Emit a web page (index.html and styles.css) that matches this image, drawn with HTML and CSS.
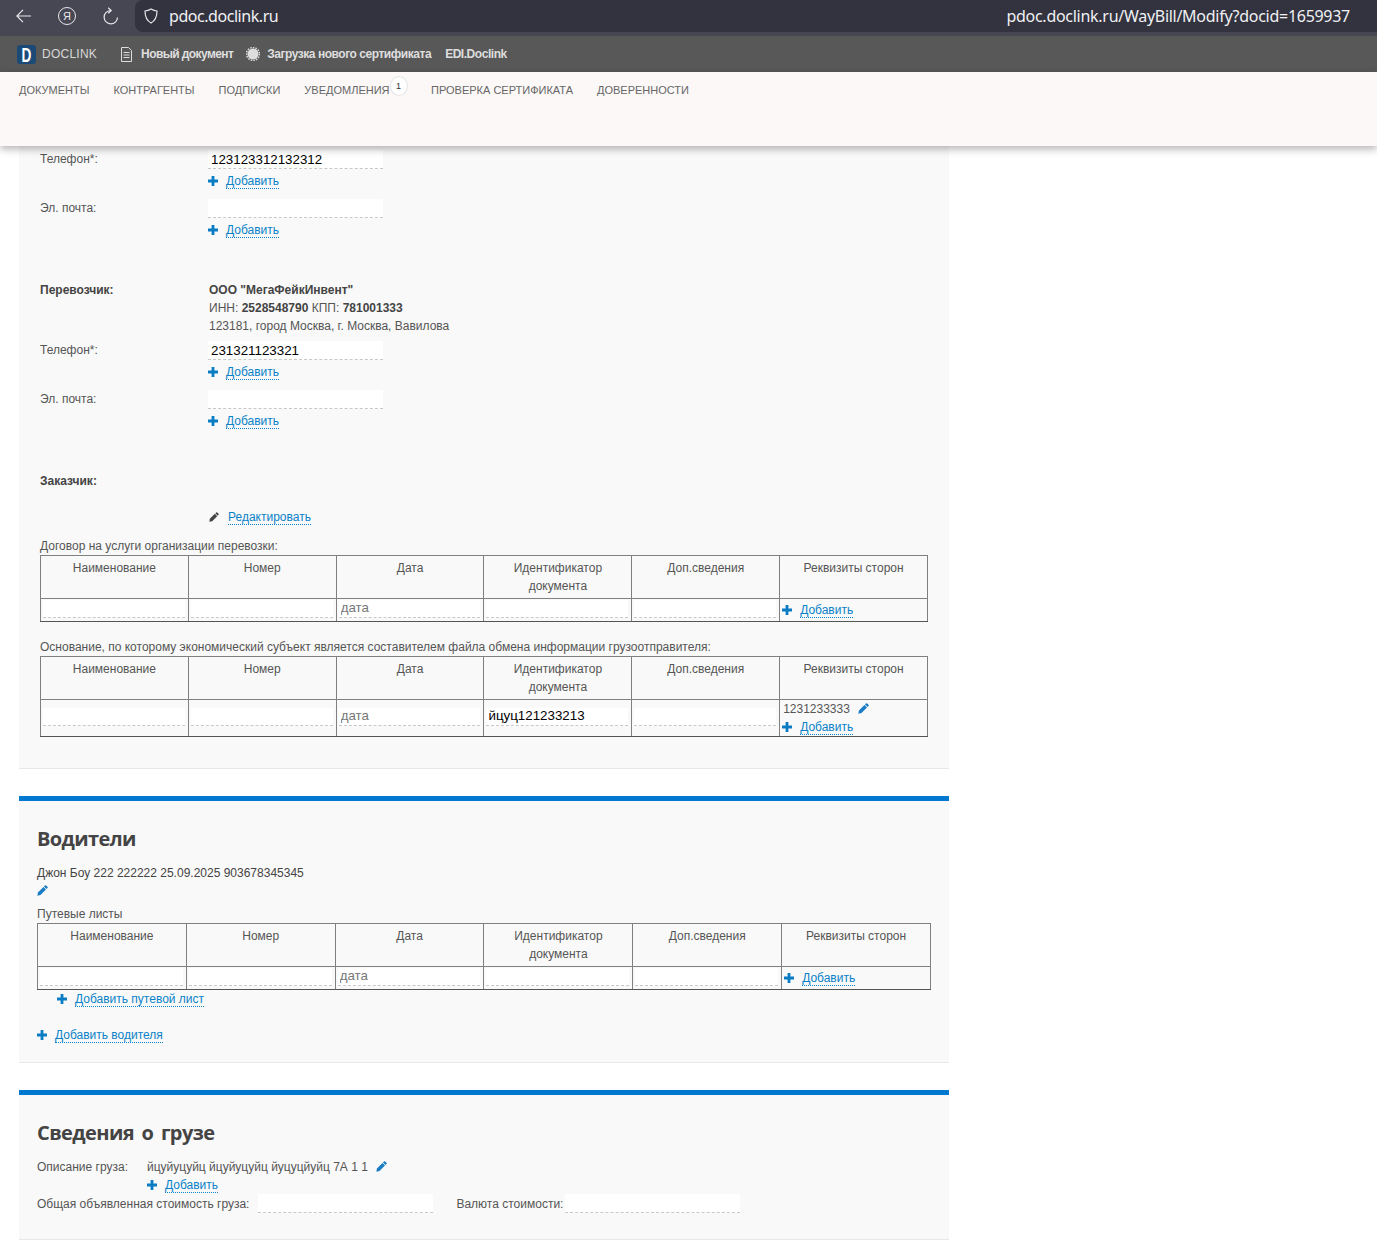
FILE: index.html
```html
<!DOCTYPE html>
<html lang="ru">
<head>
<meta charset="utf-8">
<title>DocLink</title>
<link rel="stylesheet" href="styles.css">
</head>
<body>
<svg class="defs" width="0" height="0" aria-hidden="true">
  <symbol id="plus" viewBox="0 0 10 10"><path d="M3.6 0h2.8v3.6H10v2.8H6.4V10H3.6V6.4H0V3.6h3.6z"/></symbol>
  <symbol id="pencil" viewBox="0 0 12 12"><path d="M8.6.6a1 1 0 0 1 1.4 0l1.4 1.4a1 1 0 0 1 0 1.4l-1 1L7.6 1.6zM7 2.2 9.8 5l-6 6L.4 11.8 1 8.200z"/></symbol>
</svg>

<div class="browser">
  <svg class="b-icon b-back" width="15" height="14" viewBox="0 0 15 14"><path d="M7 .8.9 7 7 13.200M.9 7H15" fill="none" stroke="#e8e8ec" stroke-width="1.200"/></svg>
  <span class="b-ya">Я</span>
  <svg class="b-icon b-reload" width="16" height="18" viewBox="0 0 16 18"><path d="M7.500 3.500A6.700 6.700 0 1 0 14.500 10.500M5.200.8 8.200 3.500 5.200 6.300" fill="none" stroke="#e8e8ec" stroke-width="1.200"/></svg>
  <div class="b-address">
    <svg class="b-shield" width="14" height="16" viewBox="0 0 14 16"><path d="M7 1c2 1.200 3.800 1.800 6 2 0 5-1.500 9.500-6 12C2.500 12.500 1 8 1 3c2.200-.2 4-.8 6-2z" fill="none" stroke="#e8e8ec" stroke-width="1.200"/></svg>
    <span class="b-host">pdoc.doclink.ru</span>
    <span class="b-url">pdoc.doclink.ru/WayBill/Modify?docid=1659937</span>
  </div>
</div>

<div class="toolbar">
  <span class="logo"><span class="logo-d">D</span></span>
  <span class="brand">DOCLINK</span>
  <svg class="tool-icon doc-icon" width="13" height="15" viewBox="0 0 13 15"><path d="M1.500.5h7l3 3v11h-10zM3.500 5.500h6M3.500 8h6M3.500 10.500h6" fill="none" stroke="#ddd"/></svg>
  <span class="tool-link tight">Новый документ</span>
  <svg class="tool-icon gear-icon" width="14" height="14" viewBox="0 0 14 14"><circle cx="7" cy="7" r="5.500" fill="#ddd"/><circle cx="7" cy="7" r="6.500" fill="none" stroke="#ddd" stroke-width="1.500" stroke-dasharray="1.500 1.200"/></svg>
  <span class="tool-link gear-text">Загрузка нового сертификата</span>
  <span class="tool-link edi">EDI.Doclink</span>
</div>

<header class="nav">
  <a class="nav-item">ДОКУМЕНТЫ</a>
  <a class="nav-item">КОНТРАГЕНТЫ</a>
  <a class="nav-item">ПОДПИСКИ</a>
  <a class="nav-item nav-badged">УВЕДОМЛЕНИЯ<span class="badge">1</span></a>
  <a class="nav-item">ПРОВЕРКА СЕРТИФИКАТА</a>
  <a class="nav-item">ДОВЕРЕННОСТИ</a>
</header>

<main class="page">
  <section class="panel panel-parties">
    <div class="field">
      <div class="label">Телефон*:</div>
      <div class="value">
        <input class="inp" value="123123312132312">
        <a class="add"><svg class="ico"><use href="#plus"/></svg><span class="lnk">Добавить</span></a>
      </div>
    </div>
    <div class="field">
      <div class="label">Эл. почта:</div>
      <div class="value">
        <input class="inp">
        <a class="add"><svg class="ico"><use href="#plus"/></svg><span class="lnk">Добавить</span></a>
      </div>
    </div>

    <div class="party">
      <div class="label"><b>Перевозчик:</b></div>
      <div class="party-text">
        <b>ООО "МегаФейкИнвент"</b><br>
        ИНН: <b>2528548790</b> КПП: <b>781001333</b><br>
        123181, город Москва, г. Москва, Вавилова
      </div>
    </div>
    <div class="field">
      <div class="label">Телефон*:</div>
      <div class="value">
        <input class="inp" value="231321123321">
        <a class="add"><svg class="ico"><use href="#plus"/></svg><span class="lnk">Добавить</span></a>
      </div>
    </div>
    <div class="field">
      <div class="label">Эл. почта:</div>
      <div class="value">
        <input class="inp">
        <a class="add"><svg class="ico"><use href="#plus"/></svg><span class="lnk">Добавить</span></a>
      </div>
    </div>

    <div class="party party-customer">
      <div class="label"><b>Заказчик:</b></div>
    </div>
    <a class="add edit"><svg class="ico ico-dark"><use href="#pencil"/></svg><span class="lnk">Редактировать</span></a>

    <div class="caption">Договор на услуги организации перевозки:</div>
    <table class="grid">
      <tr>
        <th>Наименование</th><th>Номер</th><th>Дата</th><th>Идентификатор документа</th><th>Доп.сведения</th><th>Реквизиты сторон</th>
      </tr>
      <tr>
        <td><input class="inp cell-inp"></td>
        <td><input class="inp cell-inp"></td>
        <td><input class="inp cell-inp" placeholder="дата"></td>
        <td><input class="inp cell-inp"></td>
        <td><input class="inp cell-inp"></td>
        <td class="req"><a class="add"><svg class="ico"><use href="#plus"/></svg><span class="lnk">Добавить</span></a></td>
      </tr>
    </table>

    <div class="caption caption-second">Основание, по которому экономический субъект является составителем файла обмена информации грузоотправителя:</div>
    <table class="grid">
      <tr>
        <th>Наименование</th><th>Номер</th><th>Дата</th><th>Идентификатор документа</th><th>Доп.сведения</th><th>Реквизиты сторон</th>
      </tr>
      <tr>
        <td><input class="inp cell-inp"></td>
        <td><input class="inp cell-inp"></td>
        <td><input class="inp cell-inp" placeholder="дата"></td>
        <td><input class="inp cell-inp" value="йцуц121233213"></td>
        <td><input class="inp cell-inp"></td>
        <td class="req">
          <div class="req-line">1231233333<svg class="ico ico-pen"><use href="#pencil"/></svg></div>
          <a class="add"><svg class="ico"><use href="#plus"/></svg><span class="lnk">Добавить</span></a>
        </td>
      </tr>
    </table>
  </section>

  <section class="panel panel-blue panel-drivers">
    <h2 class="title">Водители</h2>
    <div class="line driver">Джон Боу 222 222222 25.09.2025 903678345345</div>
    <div class="line"><svg class="ico ico-pen ico-solo"><use href="#pencil"/></svg></div>
    <div class="line waybills">Путевые листы</div>
    <table class="grid grid-wide">
      <tr>
        <th>Наименование</th><th>Номер</th><th>Дата</th><th>Идентификатор документа</th><th>Доп.сведения</th><th>Реквизиты сторон</th>
      </tr>
      <tr>
        <td><input class="inp cell-inp"></td>
        <td><input class="inp cell-inp"></td>
        <td><input class="inp cell-inp" placeholder="дата"></td>
        <td><input class="inp cell-inp"></td>
        <td><input class="inp cell-inp"></td>
        <td class="req"><a class="add"><svg class="ico"><use href="#plus"/></svg><span class="lnk">Добавить</span></a></td>
      </tr>
    </table>
    <a class="add add-waybill"><svg class="ico"><use href="#plus"/></svg><span class="lnk">Добавить путевой лист</span></a>
    <a class="add add-driver"><svg class="ico"><use href="#plus"/></svg><span class="lnk">Добавить водителя</span></a>
  </section>

  <section class="panel panel-blue panel-cargo">
    <h2 class="title">Сведения о грузе</h2>
    <div class="cargo-row">
      <div class="cargo-label">Описание груза:</div>
      <div>йцуйуцуйц йцуйуцуйц йуцуцйуйц 7А 1 1<svg class="ico ico-pen"><use href="#pencil"/></svg></div>
    </div>
    <a class="add add-cargo"><svg class="ico"><use href="#plus"/></svg><span class="lnk">Добавить</span></a>
    <div class="cost-row">
      <span>Общая объявленная стоимость груза:</span>
      <input class="inp">
      <span class="currency">Валюта стоимости:</span>
      <input class="inp">
    </div>
  </section>
</main>
</body>
</html>
```
FILE: styles.css
```css
* { box-sizing: border-box; }
html, body { margin: 0; padding: 0; background: #fff; }
body {
  width: 1377px;
  height: 1242px;
  overflow: hidden;
  font: 12px/18px "Liberation Sans", Arial, sans-serif;
  color: #555;
}
.defs { display: block; height: 0; }

/* browser chrome */
.browser {
  display: flex;
  align-items: center;
  height: 36px;
  background: #464753;
  padding-bottom: 4px;
}
.b-icon { flex: none; }
.b-back { margin-left: 16px; }
.b-ya {
  flex: none;
  width: 18px;
  height: 18px;
  margin-left: 27px;
  border: 1.200px solid #e8e8ec;
  border-radius: 50%;
  color: #e8e8ec;
  font: 11px/16px "Liberation Sans", sans-serif;
  text-align: center;
}
.b-reload { margin-left: 27px; }
.b-address {
  display: flex;
  align-items: center;
  flex: 1;
  height: 32px;
  margin-left: 16px;
  padding-left: 9px;
  background: #32333e;
  border-radius: 8px 0 0 8px;
  font: 16px/32px "Noto Sans", sans-serif;
  color: #f0f0f3;
}
.b-host { margin-left: 11px; letter-spacing: -0.45px; }
.b-url { margin-left: auto; margin-right: 27px; letter-spacing: -0.28px; }

/* dark toolbar */
.toolbar {
  display: flex;
  align-items: center;
  height: 36px;
  background: #585858;
  padding-left: 17px;
  color: #dedede;
}
.logo {
  width: 19px;
  height: 19px;
  border-radius: 3px;
  background: #1b4a76;
  color: #fff;
  font: bold 21px/19px "Liberation Sans", sans-serif;
  text-align: center;
}
.logo-d { display: block; transform: scaleX(.65); }
.brand { margin-left: 6px; color: #d8d8d8; letter-spacing: 0.25px; }
.doc-icon { margin-left: 23px; }
.gear-icon { margin-left: 13px; }
.tool-link { margin-left: 8px; font-weight: bold; letter-spacing: -0.46px; }
.tight { letter-spacing: -0.6px; }
.gear-text { margin-left: 7px; }
.edi { margin-left: 14px; }

/* site nav */
.nav {
  position: relative;
  z-index: 2;
  display: flex;
  align-items: flex-start;
  gap: 24px;
  height: 74px;
  padding: 9px 0 0 19px;
  background: #fbf8f7;
  box-shadow: 0 3px 8px rgba(0, 0, 0, .3);
  font-size: 11px;
  color: #666;
}
.nav-item { white-space: nowrap; }
.nav-badged { display: flex; align-items: flex-start; }
.badge {
  width: 18px;
  height: 20px;
  margin: -5px -0.5px 0 0;
  border: 1px solid #e4e4e4;
  border-radius: 50%;
  background: #fff;
  color: #333;
  font-size: 9px;
  line-height: 18px;
  text-align: center;
}

/* panels */
.page { padding-left: 19px; }
.panel {
  width: 930px;
  background: #f9f9f9;
  border-bottom: 1px solid #e8e8e8;
}
.panel-blue { margin-top: 27px; border-top: 5px solid #0078d0; }
.panel-parties { height: 623px; padding: 4px 0 0 21px; }
.panel-drivers { height: 267px; padding: 23px 0 0 18px; }
.panel-cargo { height: 150px; padding: 23px 0 0 18px; }

/* form fields */
.field { display: flex; margin-bottom: 9px; }
.label { width: 168px; flex: none; }
.value { display: flex; flex-direction: column; align-items: flex-start; }
.inp {
  display: block;
  width: 175px;
  height: 19px;
  padding: 0 3px;
  border: 0;
  border-bottom: 1px dashed #c8c8c8;
  border-radius: 0;
  background: #fff;
  outline: 0;
  font: 13.333px "Liberation Sans", Arial, sans-serif;
  color: #000;
}
.inp::placeholder { color: #777; opacity: 1; }
.add {
  display: inline-flex;
  align-items: center;
  height: 18px;
  padding-top: 2px;
  white-space: nowrap;
}
.value .add { margin-top: 3px; }
.ico {
  flex: none;
  width: 10px;
  height: 10px;
  margin: -2px 8px 0 0;
  fill: #0a7cc4;
}
.ico-dark { fill: #444; margin-left: 1px; margin-right: 9px; }
.ico-pen { width: 11px; height: 11px; margin: 0 0 0 8px; vertical-align: -1px; fill: #1a7cc4; }
.ico-solo { margin: 0; vertical-align: -1px; }
.lnk {
  color: #0a82c8;
  border-bottom: 1px dotted #0a82c8;
  line-height: 13px;
}

.party { display: flex; margin-top: 42px; margin-bottom: 6px; }
.party-text { color: #555; padding-left: 1px; }
.party-text b, .label b { color: #444; }
.party-customer { margin-bottom: 18px; height: 18px; }
.edit { display: flex; margin-left: 168px; }

.caption { margin-top: 11px; }
.caption-second { margin-top: 16px; }

/* tables */
.grid {
  width: 888px;
  table-layout: fixed;
  border-collapse: collapse;
}
.grid-wide { width: 894px; }
.grid th, .grid td { border: 1px solid #808080; }
.grid th {
  padding: 3px 10px;
  height: 43px;
  vertical-align: top;
  font-weight: normal;
  line-height: 18px;
  text-align: center;
  color: #555;
}
.grid td { height: 23px; padding: 0 3px 0 2px; vertical-align: middle; }
.grid tr:last-child td { border-bottom-color: #555; }
.cell-inp { width: 100%; height: 18px; margin-bottom: 3px; padding: 0 3px 1px 2px; }
.req { padding-left: 2px !important; }
.req .add { display: flex; }
.req-line { padding-left: 1px; color: #555; }
.req .ico { margin-right: 8px; }
.req .ico-pen { margin: 0 0 0 8px; }

/* drivers */
.title {
  margin: 0;
  font: bold 20px/30px "Open Sans", "Noto Sans", sans-serif;
  letter-spacing: -0.6px;
  word-spacing: 3px;
  color: #444;
}
.line { height: 18px; }
.driver { margin-top: 10px; color: #444; }
.waybills { margin-top: 5px; }
.add-waybill { display: flex; margin: 0 0 0 20px; height: 18px; }
.add-driver { display: flex; margin-top: 18px; }

/* cargo */
.panel-cargo .title { margin-bottom: 4px; }
.panel-cargo .title + .cargo-row { margin-top: 10px; }
.cargo-row { display: flex; }
.cargo-label { width: 110px; flex: none; }
.add-cargo { display: flex; margin-left: 110px; }
.cost-row { display: flex; align-items: center; height: 19px; }
.cost-row .inp { margin-left: 9px; }
.currency { margin-left: 23px; }
.currency + .inp { margin-left: 2px; }
```
